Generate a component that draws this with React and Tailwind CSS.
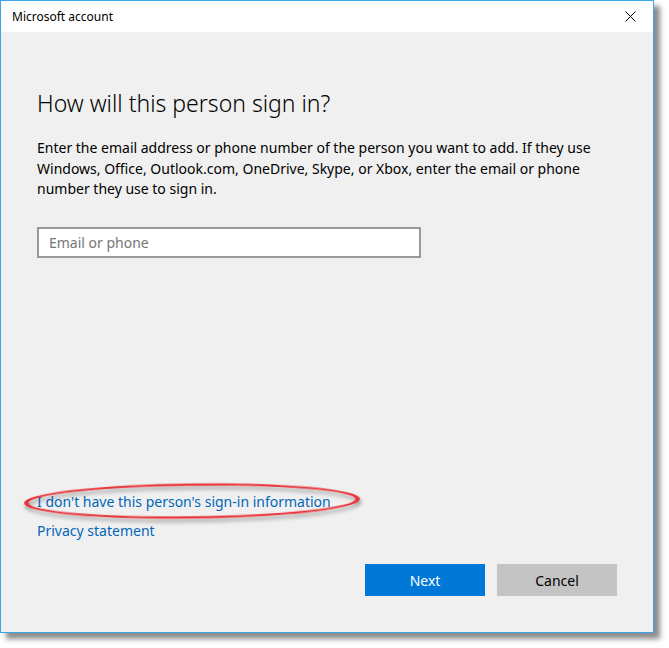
import React from "react";

const font = { fontFamily: '"Segoe UI", "Noto Sans", "Open Sans", sans-serif' };

export default function App() {
  return (
    <div className="w-[669px] h-[648px] bg-white relative" style={font}>
      <div className="w-[654px] h-[633px] border border-[#3ba4ea] bg-[#f0f0f0] flex flex-col shadow-[6px_6px_5px_rgba(0,0,0,0.45)]">
        <div className="h-[31px] bg-white flex items-center justify-between pl-[11px] pr-[17px]">
          <span className="text-[12px] text-black">Microsoft account</span>
          <svg width="11" height="11" viewBox="0 0 11 11">
            <path d="M0.5 0.5 L10.5 10.5 M10.5 0.5 L0.5 10.5" stroke="#000" strokeWidth="1" />
          </svg>
        </div>
        <div className="flex-1 flex flex-col pl-[36px] pr-[36px]">
          <h1 className="mt-[55px] text-[23px] font-light text-black leading-[32px]">How will this person sign in?</h1>
          <p className="mt-[19px] text-[14px] leading-[20.5px] text-black w-[570px]">
            Enter the email address or phone number of the person you want to add. If they use Windows, Office, Outlook.com, OneDrive, Skype, or Xbox, enter the email or phone number they use to sign in.
          </p>
          <div className="mt-[27px] w-[384px] h-[31px] border-2 border-[#999999] bg-white flex items-center pl-[10px]">
            <span className="text-[14px] text-[#767676]">Email or phone</span>
          </div>
          <div className="flex-1" />
          <div className="flex flex-col items-start text-[14px] text-[#0067b8] leading-[20px]">
            <span>I don't have this person's sign-in information</span>
            <span className="mt-[9px]">Privacy statement</span>
          </div>
          <div className="flex justify-end gap-[12px] mt-[23px] mb-[36px] mr-[0px]">
            <div className="w-[120px] h-[32px] bg-[#0078d7] text-white text-[14px] flex items-center justify-center">Next</div>
            <div className="w-[120px] h-[32px] bg-[#c4c4c4] text-black text-[14px] flex items-center justify-center">Cancel</div>
          </div>
        </div>
      </div>
      <svg className="absolute left-0 top-0 pointer-events-none" width="669" height="648">
        <defs>
          <filter id="sh" x="-10%" y="-50%" width="120%" height="200%">
            <feGaussianBlur in="SourceAlpha" stdDeviation="2" />
            <feOffset dx="1" dy="3" />
            <feComponentTransfer><feFuncA type="linear" slope="0.45" /></feComponentTransfer>
            <feMerge><feMergeNode /><feMergeNode in="SourceGraphic" /></feMerge>
          </filter>
        </defs>
        <g transform="rotate(-0.7 192 501)" filter="url(#sh)">
          <path
            fillRule="evenodd"
            fill="#e8383d"
            d="M24 501 A168 17.5 0 1 0 360 501 A168 17.5 0 1 0 24 501 Z M28.5 501 A163.5 15.3 0 1 0 355.5 501 A163.5 15.3 0 1 0 28.5 501 Z"
          />
        </g>
      </svg>
    </div>
  );
}
